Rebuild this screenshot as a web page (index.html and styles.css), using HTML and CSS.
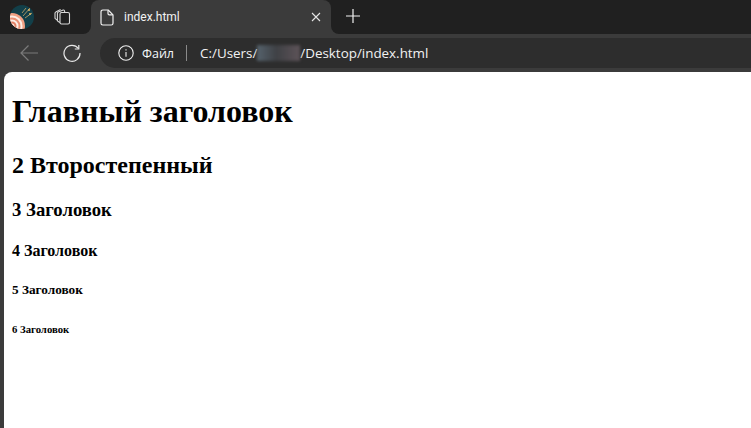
FILE: index.html
```html
<!DOCTYPE html>
<html lang="ru">
<head>
<meta charset="utf-8">
<title>index.html</title>
<link rel="stylesheet" href="styles.css">
</head>
<body>
<div class="browser">
  <header class="tabstrip">
    <div class="strip-left">
      <svg class="avatar" width="24" height="24" viewBox="0 0 24 24">
        <defs><clipPath id="disc"><circle cx="12" cy="12" r="12"/></clipPath></defs>
        <g clip-path="url(#disc)">
          <rect width="24" height="24" fill="#123f49"/>
          <circle cx="2" cy="21" r="13" fill="#f0a184"/>
          <circle cx="2" cy="21" r="10.5" fill="#fbeee6"/>
          <circle cx="2" cy="21" r="8.5" fill="#e98f73"/>
          <circle cx="2" cy="21" r="6.5" fill="#fbeee6"/>
          <circle cx="2" cy="21" r="4.5" fill="#e07e63"/>
          <circle cx="2" cy="21" r="2.5" fill="#fbeee6"/>
          <path d="M13 11 20 3M15 13 22 8M12 8 16 3" stroke="#c9a76a" stroke-width=".8"/>
          <circle cx="19" cy="5" r="1" fill="#e2b866"/>
          <circle cx="20" cy="9" r="1" fill="#e2b866"/>
        </g>
      </svg>
      <svg class="workspaces" width="18" height="18" viewBox="0 0 18 18" fill="none" stroke="#d8d8d8" stroke-width="1.1">
        <rect x="7" y="4.5" width="9.5" height="11.5" rx="1.5"/>
        <path d="M7 14.5 5.2 13.6a1.4 1.4 0 0 1-.8-1.3V5.2a1.4 1.4 0 0 1 .9-1.3L10.2 2a1 1 0 0 1 1.3.8l.3 1.7"/>
        <path d="M4.4 12.2 2.6 10.9a1.3 1.3 0 0 1-.6-1.2V5.2a1.4 1.4 0 0 1 .8-1.2L7.6 1.5"/>
      </svg>
    </div>
    <div class="tab">
      <svg class="file-icon" width="14" height="17" viewBox="0 0 14 17" fill="none" stroke="#f2f2f2" stroke-width="1.2" stroke-linejoin="round">
        <path d="M2.8 1h5.4L13 5.8v8.4a1.8 1.8 0 0 1-1.8 1.8H2.8A1.8 1.8 0 0 1 1 14.200V2.800A1.800 1.800 0 0 1 2.800 1Z"/>
        <path d="M8 1.200V4.500a1.300 1.300 0 0 0 1.300 1.300h3.500"/>
      </svg>
      <span class="tab-title">index.html</span>
      <svg class="tab-close" width="10" height="10" viewBox="0 0 10 10" stroke="#e6e6e6" stroke-width="1.100">
        <path d="M1 1 9 9M9 1 1 9"/>
      </svg>
    </div>
    <div class="strip-right">
      <svg class="new-tab" width="16" height="16" viewBox="0 0 16 16" stroke="#f2f2f2" stroke-width="1.200">
        <path d="M8 1V15M1 8H15"/>
      </svg>
    </div>
  </header>
  <nav class="toolbar">
    <svg class="back" width="20" height="18" viewBox="0 0 20 18" fill="none" stroke="#7b7b7b" stroke-width="1.200">
      <path d="M19 9H2M9.500 1.500 2 9l7.500 7.500"/>
    </svg>
    <svg class="reload" width="18" height="18" viewBox="0 0 18 18" fill="none" stroke="#e8e8e8" stroke-width="1.200">
      <path d="M15.400 4.500A8 8 0 1 0 17 9"/>
      <path d="M15.800 1v4h-4"/>
    </svg>
    <div class="address">
      <svg class="info" width="16" height="16" viewBox="0 0 16 16" fill="none" stroke="#f0f0f0" stroke-width="1.100">
        <circle cx="8" cy="8" r="7.200"/>
        <path d="M8 7v4.800"/>
        <path d="M8 4.200v1.300"/>
      </svg>
      <span class="scheme">Файл</span>
      <span class="divider"></span>
      <span class="url">C:/Users/</span><span class="blurred"></span><span class="url">/Desktop/index.html</span>
    </div>
  </nav>
  <main class="page">
    <h1>Главный заголовок</h1>
    <h2>2 Второстепенный</h2>
    <h3>3 Заголовок</h3>
    <h4>4 Заголовок</h4>
    <h5>5 Заголовок</h5>
    <h6>6 Заголовок</h6>
  </main>
</div>
</body>
</html>
```
FILE: styles.css
```css
* { box-sizing: border-box; }
html, body { margin: 0; height: 100%; overflow: hidden; background: #3b3b3b; }

.browser {
  display: flex;
  flex-direction: column;
  height: 428px;
  width: 751px;
  font-family: "Open Sans", "Noto Sans", sans-serif;
  color: #f2f2f2;
}

.tabstrip {
  display: flex;
  height: 34px;
  flex: none;
  background: linear-gradient(#202020 50%, #3b3b3b 50%);
}
.strip-left {
  width: 91px;
  display: flex;
  align-items: center;
  padding-left: 10px;
  gap: 19px;
  background: #202020;
  border-bottom-right-radius: 8px;
}
.tab {
  width: 240px;
  display: flex;
  align-items: center;
  padding: 0 10px 0 9px;
  background: #3b3b3b;
  border-radius: 8px 8px 0 0;
}
.file-icon { flex: none; }
.tab-title {
  margin-left: 10px;
  flex: 1;
  font-family: Roboto, "Open Sans", sans-serif;
  font-size: 12px;
  line-height: 16px;
}
.strip-right {
  flex: 1;
  display: flex;
  align-items: center;
  padding: 0 0 2px 14px;
  background: #202020;
  border-bottom-left-radius: 8px;
}

.toolbar {
  height: 38px;
  flex: none;
  display: flex;
  align-items: flex-start;
  padding-top: 4px;
  background: #3b3b3b;
}
.back { margin: 6px 0 0 19px; }
.reload { margin: 6px 0 0 24px; }
.address {
  margin-left: 19px;
  flex: 1;
  height: 30px;
  display: flex;
  align-items: center;
  padding-left: 18px;
  background: #2d2d2d;
  border-radius: 15px 0 0 15px;
  font-size: 13.4px;
}
.scheme { margin-left: 8px; font-size: 12.5px; font-weight: 500; color: #f4f8fb; }
.divider { width: 1px; height: 16px; margin: 0 13px 0 12px; background: #8a8a8a; }
.url { white-space: nowrap; }
.blurred {
  width: 43px;
  height: 16px;
  background: linear-gradient(90deg, #55626c, #3f4145 45%, #5d5358);
  filter: blur(1.5px);
}

.page {
  flex: 1;
  margin-left: 4px;
  padding: 0 8px;
  overflow: hidden;
  background: #fff;
  border-top-left-radius: 8px;
  font-family: "Liberation Serif", "Times New Roman", serif;
  color: #000;
}
```
